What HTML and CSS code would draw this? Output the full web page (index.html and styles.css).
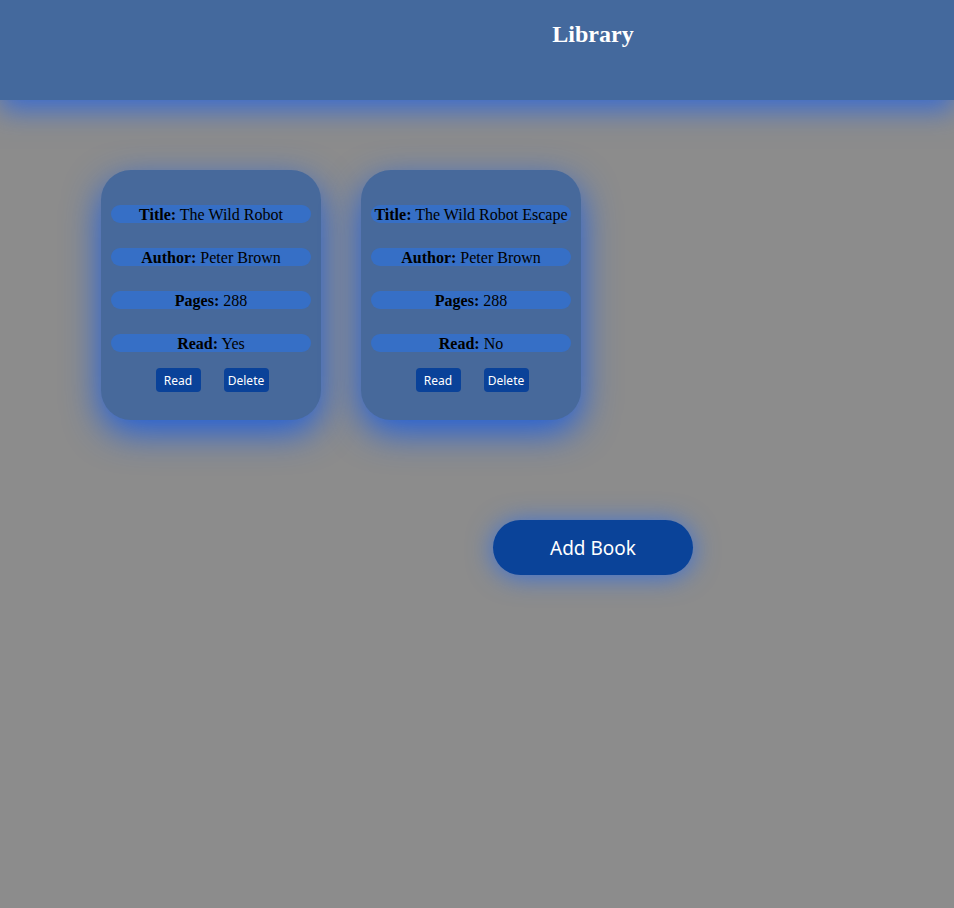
FILE: index.html
```html
<!DOCTYPE html>
<html>
<head>
<meta charset="utf-8">
<link rel="stylesheet" href="styles.css">
</head>
<body>
<header class="top">
  <h1 class="title">Library</h1>
</header>
<main class="library">
  <div class="cards">
    <div class="card">
      <p class="field"><b>Title:</b> The Wild Robot</p>
      <p class="field"><b>Author:</b> Peter Brown</p>
      <p class="field"><b>Pages:</b> 288</p>
      <p class="field"><b>Read:</b> Yes</p>
      <div class="actions">
        <button class="btn">Read</button>
        <button class="btn">Delete</button>
      </div>
    </div>
    <div class="card">
      <p class="field"><b>Title:</b> The Wild Robot Escape</p>
      <p class="field"><b>Author:</b> Peter Brown</p>
      <p class="field"><b>Pages:</b> 288</p>
      <p class="field"><b>Read:</b> No</p>
      <div class="actions">
        <button class="btn">Read</button>
        <button class="btn">Delete</button>
      </div>
    </div>
  </div>
  <div class="add-row">
    <button class="add">Add Book</button>
  </div>
</main>
</body>
</html>
```

FILE: styles.css
```css
html, body {
  margin: 0;
  padding: 0;
  height: 100%;
}
body {
  background: #8c8c8c;
  font-family: "Liberation Serif", "Times New Roman", serif;
}
.top {
  height: 100px;
  background: #44699d;
  box-shadow: 0 10px 26px #3a6cd0;
  display: flex;
  justify-content: center;
  padding-left: 232px;
  box-sizing: border-box;
  position: relative;
}
.title {
  margin: 20px 0 0;
  font-size: 24px;
  font-weight: bold;
  color: #ffffff;
  line-height: 28px;
}
.library {
  padding: 70px 0 0 101px;
}
.cards {
  display: flex;
  gap: 40px;
}
.card {
  width: 220px;
  height: 250px;
  box-sizing: border-box;
  background: #47699b;
  border-radius: 30px;
  box-shadow: 0 12px 36px #1f5fdc;
  padding: 35px 10px 0;
  display: flex;
  flex-direction: column;
  align-items: center;
}
.field {
  margin: 0 0 25px;
  width: 200px;
  height: 18px;
  box-sizing: border-box;
  padding-top: 1px;
  background: #366fc6;
  border-radius: 9px;
  text-align: center;
  font-size: 16px;
  line-height: 18px;
  color: #000;
  white-space: nowrap;
}
.field:nth-of-type(4) {
  margin-bottom: 16px;
}
.actions {
  display: flex;
  gap: 23px;
  justify-content: center;
  padding-left: 2px;
}
.btn {
  width: 45px;
  height: 24px;
  padding: 0;
  border: none;
  border-radius: 4px;
  background: #0a4299;
  color: #ffffff;
  font-family: "Noto Sans", "DejaVu Sans", sans-serif;
  font-size: 12px;
}
.add-row {
  display: flex;
  justify-content: center;
  padding: 100px 0 0 131px;
}
.add {
  width: 200px;
  height: 55px;
  border: none;
  border-radius: 28px;
  background: #0a4399;
  color: #ffffff;
  font-family: "Noto Sans", "DejaVu Sans", sans-serif;
  font-size: 19px;
  box-shadow: 0 2px 26px #3a70d8;
}
```
